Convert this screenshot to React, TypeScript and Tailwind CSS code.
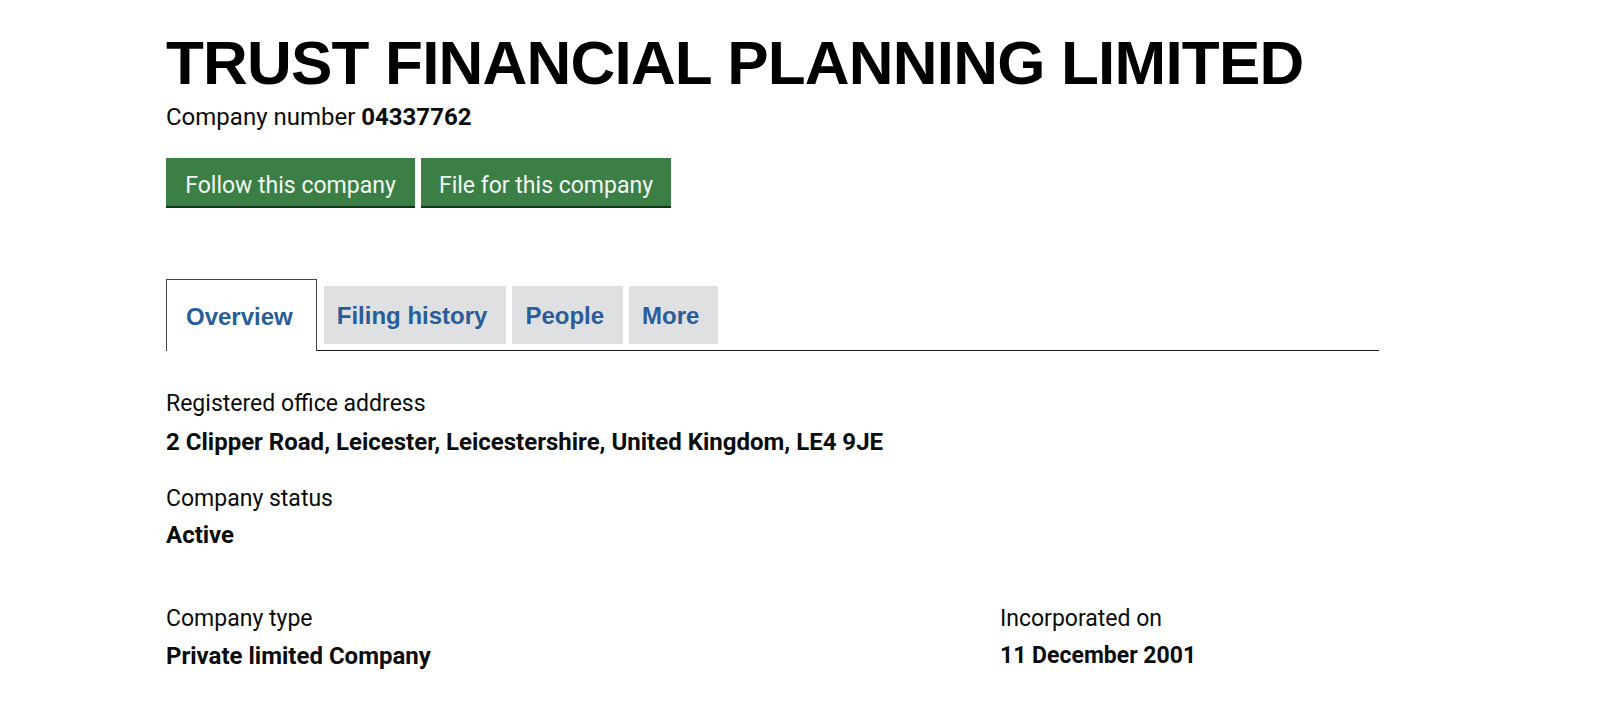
import React from "react";

const tabs = ["Filing history", "People", "More"];

const App: React.FC = () => {
  return (
    <div className="min-h-[716px] bg-white text-[#0b0c0c] font-['Roboto',sans-serif]">
      <div className="ml-[166px] w-[1213px] pt-[32px]">
        <h1 className="font-['Liberation_Sans',Arial,sans-serif] text-[62px] font-bold leading-none tracking-[-0.8px] text-black">
          TRUST FINANCIAL PLANNING LIMITED
        </h1>
        <p className="mt-[8px] text-[24px] leading-[30px]">
          Company number <strong className="font-bold">04337762</strong>
        </p>

        <div className="mt-[26px] flex gap-[6px]">
          <button className="h-[50px] w-[249px] border-b-2 border-[#10331a] bg-[#3b7f47] pt-[8px] text-[23px] text-[#f3f7f3]">
            Follow this company
          </button>
          <button className="h-[50px] w-[250px] border-b-2 border-[#10331a] bg-[#3b7f47] pt-[8px] text-[23px] text-[#f3f7f3]">
            File for this company
          </button>
        </div>

        {/* tabs */}
        <div className="mt-[71px] flex items-end gap-[6px] border-b border-[#1b1b1b] font-['Liberation_Sans',Arial,sans-serif] text-[24px] font-bold text-[#2a5d98]">
          <div className="-mb-px mr-px flex h-[72px] items-center border border-b-0 border-[#444] bg-white pl-[19px] pr-[23px] pt-[2px]">
            Overview
          </div>
          {tabs.map((t) => (
            <div key={t} className="mb-[6px] flex h-[58px] items-center bg-[#dee0e2] pl-[13px] pr-[19px] pt-[2px]">
              {t}
            </div>
          ))}
        </div>

        <div className="pt-[38px] text-[23px] leading-[30px]">
          <div>Registered office address</div>
          <div className="mt-2 text-[24px] font-bold">
            2 Clipper Road, Leicester, Leicestershire, United Kingdom, LE4 9JE
          </div>

          <div className="mt-[27px]">Company status</div>
          <div className="mt-[6px] text-[24px] font-bold">Active</div>

          <div className="mt-[54px] grid grid-cols-[834px_1fr]">
            <div>
              <div>Company type</div>
              <div className="mt-[7px] text-[24px] font-bold">Private limited Company</div>
            </div>
            <div>
              <div>Incorporated on</div>
              <div className="mt-[7px] text-[23px] font-bold">11 December 2001</div>
            </div>
          </div>
        </div>
      </div>
    </div>
  );
};

export default App;
